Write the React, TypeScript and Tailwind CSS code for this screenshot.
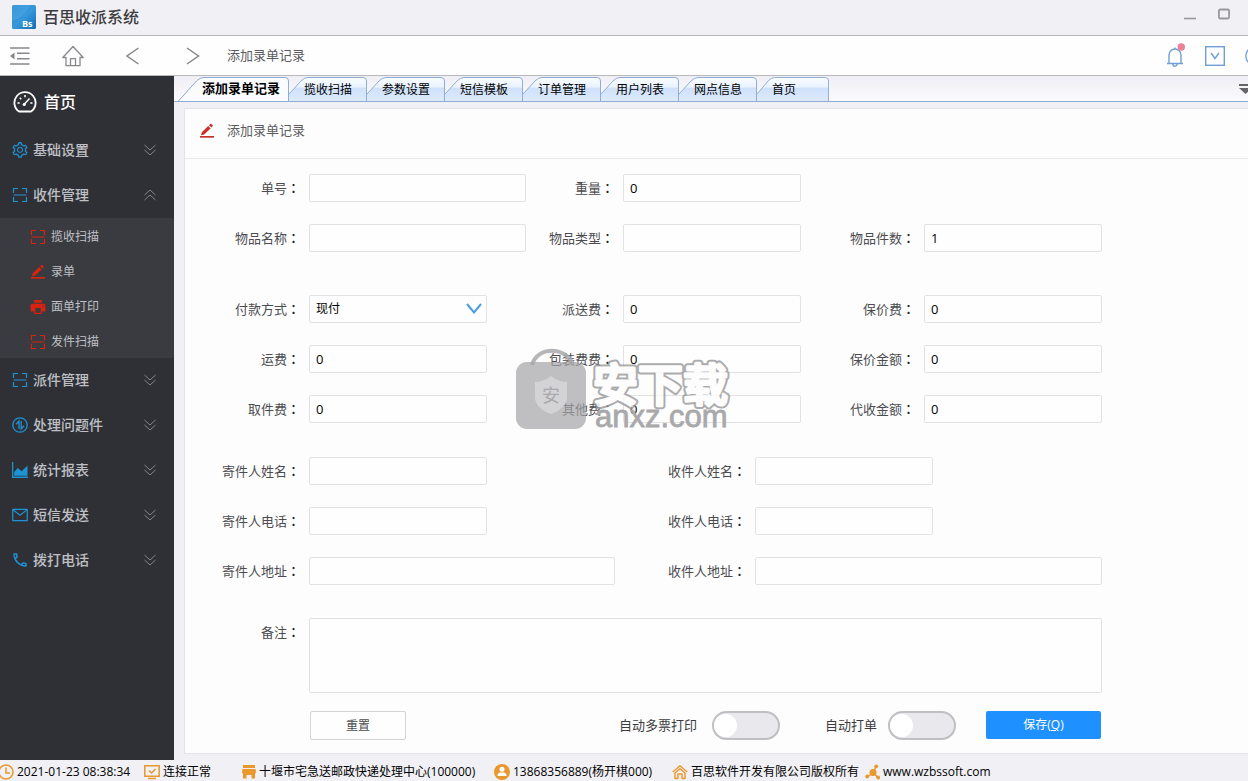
import { useState } from 'react'
import type { ReactNode, SVGProps } from 'react'
import { AiFillPrinter, AiOutlineMail, AiOutlineSetting } from 'react-icons/ai'
import { MdOutlinePhone } from 'react-icons/md'

function Svg({ children, ...props }: SVGProps<SVGSVGElement>) {
  return (
    <svg fill="none" stroke="currentColor" aria-hidden="true" {...props}>
      {children}
    </svg>
  )
}

function PenIcon({ className }: { className?: string }) {
  return (
    <Svg viewBox="0 0 16 16" className={className} stroke="none">
      <path d="M2 12.2 2.8 9.2 9.2 3l2.4 2.4-6.400 6.200zM10 2.300l1.300-1.200q.600-.500 1.200 0l1 1q.500.600 0 1.200l-1.200 1.300z" fill="currentColor" />
      <path d="M1 13h14v1.700H1z" fill="currentColor" />
    </Svg>
  )
}

function ScanIcon({ className }: { className?: string }) {
  return (
    <Svg viewBox="0 0 16 16" className={className} strokeWidth="1.2">
      <path d="M1.500 6V1.500H6M10 1.500h4.500V6M14.500 10v4.500H10M6 14.500H1.500V10M1.500 8h13" />
    </Svg>
  )
}

function SwapIcon({ className }: { className?: string }) {
  return (
    <Svg viewBox="0 0 16 16" className={className} strokeWidth="1.3">
      <circle cx="8" cy="8" r="7.2" />
      <path d="M7 12V4L4.200 7.200M9.200 4v8l2.800-3.200" />
    </Svg>
  )
}

function ChartIcon({ className }: { className?: string }) {
  return (
    <Svg viewBox="0 0 16 16" className={className} stroke="none">
      <path d="M0 0h1.300v14.500H16V16H0z" fill="currentColor" />
      <path d="M2.200 13.700V10l3.500-4 4 3.200 5.800-5.700v10.200z" fill="currentColor" />
    </Svg>
  )
}

// double chevron, flipped while the group is open
function GroupArrow({ open }: { open: boolean }) {
  return (
    <Svg viewBox="0 0 12 12" className={`ml-auto size-3 text-[#85868b] ${open ? 'rotate-180' : ''}`}>
      <path d="m.5 1 5.500 5 5.500-5M.5 6 6 11l5.500-5" />
    </Svg>
  )
}

const MENU = [
  { name: '基础设置', icon: <AiOutlineSetting className="size-[18px]" /> },
  {
    name: '收件管理',
    icon: <ScanIcon className="size-4" />,
    children: [
      { name: '揽收扫描', icon: <ScanIcon className="size-4" /> },
      { name: '录单', icon: <PenIcon className="size-4" /> },
      { name: '面单打印', icon: <AiFillPrinter className="size-[18px]" /> },
      { name: '发件扫描', icon: <ScanIcon className="size-4" /> },
    ],
  },
  { name: '派件管理', icon: <ScanIcon className="size-4" /> },
  { name: '处理问题件', icon: <SwapIcon className="size-4" /> },
  { name: '统计报表', icon: <ChartIcon className="size-4" /> },
  { name: '短信发送', icon: <AiOutlineMail className="size-[18px]" /> },
  { name: '拨打电话', icon: <MdOutlinePhone className="size-[18px]" /> },
]

const TABS = ['揽收扫描', '参数设置', '短信模板', '订单管理', '用户列表', '网点信息', '首页']

function TitleBar() {
  return (
    <header className="flex h-9 shrink-0 items-center border-b border-[#b9b8bd] bg-[#f1f0f5] pr-[18px] pl-3">
      <Svg viewBox="0 0 24 24" className="mb-px size-6 overflow-visible" stroke="none">
        <defs>
          <linearGradient id="logo" x1="0" y1="0" x2="1" y2="1">
            <stop offset="0" stopColor="#2a86cb" />
            <stop offset="0.5" stopColor="#3798dc" />
            <stop offset="1" stopColor="#126cb5" />
          </linearGradient>
        </defs>
        <rect width="24" height="24" rx="1.5" fill="url(#logo)" />
        <path d="M0 1.5Q0 0 1.5 0H18Q12 13 0 16z" fill="#58b0ea" opacity="0.4" />
        <text x="10" y="22" fontSize="9" fontWeight="700" fill="#fff" fontFamily="Open Sans, sans-serif">Bs</text>
      </Svg>
      <h1 className="mb-px ml-[7px] text-base font-medium text-[#3c3c40]">百思收派系统</h1>
      <div className="ml-auto flex gap-[22px] text-[#98979c]">
        <button aria-label="最小化">
          <Svg viewBox="0 0 12 12" className="mb-2 size-3" strokeWidth="1.6">
            <path d="M0 10.5h12" />
          </Svg>
        </button>
        <button aria-label="最大化">
          <Svg viewBox="0 0 12 12" className="mb-2 size-3" strokeWidth="1.8">
            <rect x="0.9" y="1.5" width="10.2" height="9" rx="1.5" />
          </Svg>
        </button>
      </div>
    </header>
  )
}

function Toolbar() {
  return (
    <div className="flex h-10 shrink-0 items-center overflow-hidden border-b border-[#b9b8bd] bg-[#fefefe] pl-[9px] text-[#88888c]">
      <button aria-label="收起菜单" className="mr-[31px]">
        <Svg viewBox="0 0 22 20" className="h-5 w-[22px]" strokeWidth="1.6">
          <path d="M1 2h19.500M8 7.300h12.500M8 12.700h12.500M1 18h19.500" />
          <path d="M5.500 6.500v7L1 10z" fill="currentColor" stroke="none" />
        </Svg>
      </button>
      <button aria-label="主页" className="mr-[42px]">
        <Svg viewBox="0 0 22 22" className="size-[22px]" strokeWidth="1.3">
          <path d="M4 12.500H.8L11 1.500l10.200 11H18v8.200h-4.500v-7h-5v7H4zM8.500 20.700h5" strokeLinejoin="round" />
        </Svg>
      </button>
      <button aria-label="后退" className="mr-[46px]">
        <Svg viewBox="0 0 14 20" className="h-5 w-[14px]" strokeWidth="1.5">
          <path d="M12.500 2 1 10l11.500 8" />
        </Svg>
      </button>
      <button aria-label="前进" className="mr-[27px]">
        <Svg viewBox="0 0 14 20" className="h-5 w-[14px]" strokeWidth="1.5">
          <path d="M1 2l11.500 8L1 18" />
        </Svg>
      </button>
      <span className="text-[13px] text-[#5c5c60]">添加录单记录</span>
      <div className="-mr-[17px] ml-auto flex items-center gap-5 text-[#6f9fd3]">
        <button aria-label="通知">
          <Svg viewBox="0 0 19 26" className="h-[26px] w-[19px]" strokeWidth="1.4">
            <path d="M1 20.500h16M3 20.500v-8.500a6 6 0 0 1 12 0v8.500M9 5.800V4.500M6.800 20.500a2.200 2.700 0 0 0 4.400 0" />
            <circle cx="15.3" cy="4" r="3.7" fill="#e98199" stroke="none" />
          </Svg>
        </button>
        <button aria-label="下拉">
          <Svg viewBox="0 0 20 20" className="size-5" strokeWidth="1.4">
            <rect x="0.7" y="0.7" width="18.6" height="18.6" />
            <path d="m6 7 4 5.500L14 7" />
          </Svg>
        </button>
        <button aria-label="帮助">
          <Svg viewBox="0 0 20 20" className="size-5" strokeWidth="1.4">
            <circle cx="10" cy="10" r="9.2" />
          </Svg>
        </button>
      </div>
    </div>
  )
}

function Sidebar() {
  const [open, setOpen] = useState('收件管理')

  return (
    <nav className="w-[174px] shrink-0 bg-[#2f3036] text-[#bfc0c6]">
      <a href="#home" className="flex h-[52px] items-center pl-[13px] text-base font-medium text-white">
        <Svg viewBox="0 0 24 24" className="mr-[7px] size-6" strokeWidth="1.8">
          <path d="M6 21.500a10.600 10.600 0 1 1 12 0z" strokeLinejoin="round" />
          <path d="m11 14.500 5.500-6M4.500 13h2.200M17.300 13h2.200M12 5v2.200M6.800 7.800l1.400 1.400" strokeWidth="1.5" />
          <circle cx="11.2" cy="14.5" r="1.6" fill="currentColor" stroke="none" />
        </Svg>
        首页
      </a>
      {MENU.map((item) => (
        <div key={item.name}>
          <button
            onClick={() => setOpen(open === item.name ? '' : item.name)}
            className="flex h-[45px] w-full items-center pr-[18px] pb-px pl-[11px] text-sm font-medium"
          >
            <span className="flex w-[22px] text-[#1e93d3]">
              <span className="flex w-[18px] justify-center">{item.icon}</span>
            </span>
            {item.name}
            <GroupArrow open={open === item.name} />
          </button>
          {open === item.name && item.children && (
            <ul className="bg-[#3a3b41]">
              {item.children.map((child) => (
                <li key={child.name}>
                  <a href="#" className="flex h-[35px] items-center pt-[2px] pl-[29px] text-xs">
                    <span className="flex w-[22px] text-[#d8230f]">
                      <span className="flex w-[18px] justify-center">{child.icon}</span>
                    </span>
                    {child.name}
                  </a>
                </li>
              ))}
            </ul>
          )}
        </div>
      ))}
    </nav>
  )
}

function TabStrip() {
  return (
    <div className="flex h-[26px] shrink-0 overflow-hidden border-b border-[#8fadd2] bg-linear-to-b from-[#efeef5] to-[#fbfbfe]">
      <button className="relative h-[26px] w-[115px] shrink-0 pl-7 text-left text-[13px] font-bold text-black">
        <Svg viewBox="0 0 115 26" className="absolute inset-0 h-[26px] w-[115px]">
          <path d="M4 26 22.500 5Q26 1.500 30 1.500h81q3.500 0 3.500 3.500v21z" fill="#fbfcfe" stroke="none" />
          <path d="M4 25.500 22.500 5Q26 1.500 30 1.500h81q3.500 0 3.500 3.500v20.500" stroke="#8fadd2" />
        </Svg>
        <span className="relative">添加录单记录</span>
      </button>
      {TABS.map((tab) => (
        <button
          key={tab}
          className={`relative h-[26px] shrink-0 pt-px pl-[15px] text-left text-xs text-black ${tab === '首页' ? 'w-[72px]' : 'w-[78px]'}`}
        >
          <Svg viewBox="0 0 78 26" preserveAspectRatio="none" className="absolute inset-0 h-[26px] w-full">
            <defs>
              <linearGradient id="tab" x1="0" y1="0" x2="0" y2="1">
                <stop offset="0" stopColor="#fafdff" />
                <stop offset="0.4" stopColor="#e8f2fe" />
                <stop offset="0.45" stopColor="#cfe1fa" />
                <stop offset="1" stopColor="#deeafc" />
              </linearGradient>
            </defs>
            <path d="M0 18 12 5Q15.500 1.500 19 1.500h55q3.500 0 3.500 3.500v20.500H0z" fill="url(#tab)" stroke="none" />
            <path d="M0 18 12 5Q15.500 1.500 19 1.500h55q3.500 0 3.500 3.500v20.500H0" stroke="#8fadd2" />
          </Svg>
          <span className="relative">{tab}</span>
        </button>
      ))}
      <button aria-label="标签列表" className="-mr-1 ml-auto">
        <Svg viewBox="0 0 13 10" className="h-[10px] w-[13px] text-[#66666a]" stroke="none">
          <path d="M0 0h13v2H0zM0 4h13L6.500 10z" fill="currentColor" />
        </Svg>
      </button>
    </div>
  )
}

const CONTROL = 'w-full min-w-0 rounded-xs border border-[#e2e2e6] bg-[#fefefe] px-[6px] text-black outline-none focus:border-[#1e90ff]'

function Field({ id, label, value, width = 'w-[116px]', children }: {
  id: string
  label: string
  value?: string
  width?: string
  children?: ReactNode
}) {
  return (
    <div className="flex gap-2">
      <label htmlFor={id} className={`${width} shrink-0 pr-px text-right text-[13px] leading-7 whitespace-nowrap text-[#4c4c50]`}>
        {label}
        <span className="font-['Noto_Sans_CJK_TC',sans-serif] font-medium text-[#222]">：</span>
      </label>
      {children ?? <input id={id} type="text" defaultValue={value} className={`${CONTROL} h-7 text-[13px]`} />}
    </div>
  )
}

function Toggle({ label, gap }: { label: string; gap: string }) {
  return (
    <label className={`flex items-center text-[13px] text-[#3c3c40] ${gap}`}>
      {label}
      <input
        type="checkbox"
        role="switch"
        className="h-[29px] w-[68px] appearance-none rounded-full border-2 border-[#bfbec3] bg-[#e9e8ed] before:block before:size-[23px] before:translate-y-px before:rounded-full before:bg-white checked:bg-[#1e90ff] checked:before:translate-x-[40px]"
      />
    </label>
  )
}

function Watermark() {
  return (
    <Svg viewBox="0 0 220 90" className="pointer-events-none absolute top-[238px] left-[328px] h-[90px] w-[220px]" stroke="none">
      <defs>
        <text id="mark" x="80" y="55" fontFamily="Noto Sans CJK SC" fontWeight="500" fontSize="45">安下载</text>
      </defs>
      <path d="M19 18C24-1 53-1 60 18" stroke="#a9a9ab" strokeOpacity="0.85" strokeWidth="4" />
      <rect x="3" y="15" width="70" height="67" rx="11" fill="#a4a4a6" opacity="0.7" />
      <path d="M38 29q8 6 16 6v15q0 11-16 17-16-6-16-17V35q8 0 16-6z" fill="#d9d9db" opacity="0.75" />
      <text x="29" y="55" fontSize="18" fill="#a9a9ab">安</text>
      <g strokeLinejoin="round" opacity="0.8">
        <use href="#mark" stroke="#98989a" strokeWidth="7" />
        <use href="#mark" fill="#fdfdfd" stroke="#fdfdfd" strokeWidth="3" />
      </g>
      <text x="82" y="80" fontFamily="Liberation Sans" fontSize="31" fill="#a9a9ab" stroke="#a9a9ab" strokeWidth="0.8">anxz.com</text>
    </Svg>
  )
}

function RecordForm() {
  return (
    <form className="w-full max-w-[917px] pt-[15px] pb-[13px]" onSubmit={(e) => e.preventDefault()}>
      <div className="grid grid-cols-[341fr_275fr_301fr] gap-y-[22px]">
        <Field id="no" label="单号" />
        <Field id="weight" label="重量" value="0" width="w-[89px]" />
        <span />
        <Field id="goods" label="物品名称" />
        <Field id="kind" label="物品类型" width="w-[89px]" />
        <Field id="count" label="物品件数" value="1" width="w-[115px]" />
      </div>

      <div className="mt-[43px] grid grid-cols-[302fr_314fr_301fr] gap-y-[22px]">
        <Field id="pay" label="付款方式">
          <div className="relative w-full">
            <select id="pay" className={`${CONTROL} h-7 appearance-none text-xs`}>
              <option>现付</option>
              <option>到付</option>
            </select>
            <Svg viewBox="0 0 16 11" className="pointer-events-none absolute top-2 right-[5px] h-[11px] w-4 text-[#4a9de0]" strokeWidth="2">
              <path d="m1 1 7 8.500L15 1" />
            </Svg>
          </div>
        </Field>
        <Field id="delivery" label="派送费" value="0" width="w-32" />
        <Field id="insure" label="保价费" value="0" width="w-[115px]" />
        <Field id="freight" label="运费" value="0" />
        <Field id="packing" label="包装费费" value="0" width="w-32" />
        <Field id="insured" label="保价金额" value="0" width="w-[115px]" />
        <Field id="pickup" label="取件费" value="0" />
        <Field id="other" label="其他费" value="0" width="w-32" />
        <Field id="cod" label="代收金额" value="0" width="w-[115px]" />
      </div>

      <div className="mt-[34px] grid grid-cols-[302fr_446fr_169fr] gap-y-[22px]">
        <Field id="from-name" label="寄件人姓名" />
        <Field id="to-name" label="收件人姓名" width="w-[260px]" />
        <span />
        <Field id="from-tel" label="寄件人电话" />
        <Field id="to-tel" label="收件人电话" width="w-[260px]" />
        <span />
      </div>

      <div className="mt-[22px] grid grid-cols-[430fr_487fr]">
        <Field id="from-addr" label="寄件人地址" />
        <Field id="to-addr" label="收件人地址" width="w-[132px]" />
      </div>

      <div className="mt-[33px]">
        <Field id="remark" label="备注">
          <textarea id="remark" className={`${CONTROL} h-[75px] resize-none text-[13px]`} />
        </Field>
      </div>

      <div className="mt-[18px] flex pr-px pl-[125px]">
        <button type="reset" className="h-[29px] w-24 rounded-xs border border-[#d3d3d7] bg-[#fefefe] text-xs text-[#4c4c50]">
          重置
        </button>
        <div className="ml-auto flex">
          <Toggle label="自动多票打印" gap="mr-[45px] gap-[15px]" />
          <Toggle label="自动打单" gap="mr-[30px] gap-[11px]" />
          <button type="submit" className="h-7 w-[115px] rounded-xs bg-[#1e90ff] text-xs text-white">
            保存(<u>Q</u>)
          </button>
        </div>
      </div>
    </form>
  )
}

function StatusBar() {
  return (
    <footer className="flex h-[21px] shrink-0 items-center overflow-hidden bg-[#f1f0f5] pt-[2px] text-xs whitespace-nowrap text-black">
      <span className="flex w-36 items-center gap-[3px]">
        <Svg viewBox="0 0 16 16" className="-ml-[2px] size-4 text-[#e8982c]" strokeWidth="1.5">
          <circle cx="8" cy="8" r="7" />
          <path d="M8 3.500V9h4" />
        </Svg>
        2021-01-23 08:38:34
      </span>
      <span className="flex w-[97px] items-center gap-[3px]">
        <Svg viewBox="0 0 16 16" className="size-4 text-[#e8982c]" strokeWidth="1.5">
          <path d="M.8 1.800h14.400v10.400H.8zM4 14.500h8M5 6.500l2.500 2.500L11.500 5" />
        </Svg>
        连接正常
      </span>
      <span className="flex w-[253px] items-center gap-[2px]">
        <Svg viewBox="0 0 16 16" className="size-4 text-[#e8982c]" stroke="none">
          <path d="M2 1h12v3H2zM1.500 5h13l.5 3q0 1.500-1 1.500v5h-3.500V11h-5v3.500H2v-5Q1 9.500 1 8z" fill="currentColor" />
        </Svg>
        十堰市宅急送邮政快递处理中心(100000)
      </span>
      <span className="flex w-[178px] items-center gap-[3px]">
        <Svg viewBox="0 0 16 16" className="size-4 text-[#e8982c]" stroke="none">
          <circle cx="8" cy="8" r="8" fill="currentColor" />
          <circle cx="8" cy="5.2" r="2.5" fill="#fff" />
          <path d="M3.500 12q0-3.500 3-3.500h3q3 0 3 3.500z" fill="#fff" />
        </Svg>
        13868356889(杨开棋000)
      </span>
      <span className="flex w-[193px] items-center gap-[3px]">
        <Svg viewBox="0 0 16 16" className="size-4 text-[#e8982c]" strokeWidth="1.4">
          <path d="M.8 8 8 1.800 15.200 8M3 9v5.500h3V10h4v4.500h3V9L8 4.800z" strokeLinejoin="round" />
        </Svg>
        百思软件开发有限公司版权所有
      </span>
      <a href="#site" className="flex items-center gap-[2px]">
        <Svg viewBox="0 0 16 16" className="size-4 text-[#e8982c]" strokeWidth="1.5">
          <path d="M8.500 8 11 2.500M8 9l-6 4M8.500 9l4.500 4.500" />
          <circle cx="8" cy="8.5" r="3.5" fill="currentColor" stroke="none" />
          <circle cx="11.2" cy="2.3" r="1.9" fill="currentColor" stroke="none" />
          <circle cx="2.2" cy="12.5" r="1.9" fill="currentColor" stroke="none" />
          <circle cx="13.2" cy="13.5" r="1.9" fill="currentColor" stroke="none" />
        </Svg>
        www.wzbssoft.com
      </a>
    </footer>
  )
}

export default function App() {
  return (
    <div className="flex min-h-screen flex-col bg-[#f1f0f5] font-['Open_Sans','Noto_Sans_CJK_SC',sans-serif]">
      <TitleBar />
      <Toolbar />
      <div className="flex flex-1">
        <Sidebar />
        <main className="flex min-w-0 flex-1 flex-col">
          <TabStrip />
          <section className="relative mt-[6px] mb-[6px] ml-[10px] flex-1 border border-r-0 border-[#e3e3e8] bg-[#fdfdfd]">
            <h2 className="flex h-[50px] items-center border-b border-[#e9e9ed] pb-[6px] pl-[14px] text-[13px] text-[#5c5c60]">
              <PenIcon className="mr-3 size-4 text-[#c9302c]" />
              添加录单记录
            </h2>
            <RecordForm />
            <Watermark />
          </section>
        </main>
      </div>
      <StatusBar />
    </div>
  )
}
